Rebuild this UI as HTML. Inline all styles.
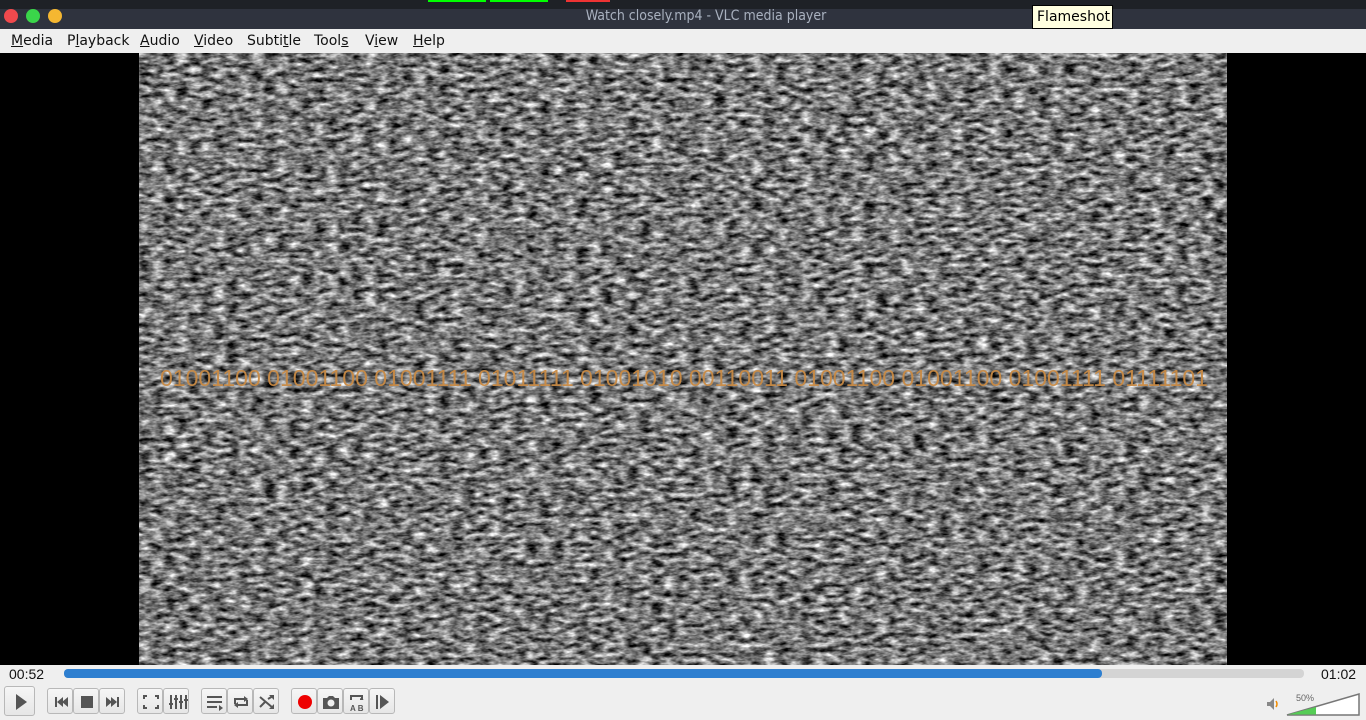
<!DOCTYPE html>
<html><head><meta charset="utf-8"><style>
*{margin:0;padding:0;box-sizing:border-box}
body{width:1366px;height:720px;overflow:hidden;background:#000;font-family:"Liberation Sans","DejaVu Sans",sans-serif;position:relative}
.a{position:absolute}
.menu span{position:absolute;top:4px;color:#111;font-family:"DejaVu Sans",sans-serif;font-size:14px}
.btn{position:absolute;top:688px;height:26px;border:1px solid #b8b8b8;border-radius:3px;background:linear-gradient(#f6f6f6,#e6e6e6)}
.btn svg{position:absolute;left:0;top:0}
</style></head><body>
<div class="a" style="left:0;top:0;width:1366px;height:9px;background:#1e2126"></div>
<div class="a" style="left:428px;top:0;width:58px;height:2px;background:#0f0"></div>
<div class="a" style="left:490px;top:0;width:58px;height:2px;background:#0f0"></div>
<div class="a" style="left:566px;top:0;width:44px;height:2px;background:#e33"></div>
<div class="a" style="left:0;top:9px;width:1366px;height:20px;background:#2f333e"></div>
<div class="a" style="left:4px;top:9px;width:14px;height:14px;border-radius:50%;background:#f0494d"></div>
<div class="a" style="left:26px;top:9px;width:14px;height:14px;border-radius:50%;background:#3ad64a"></div>
<div class="a" style="left:48px;top:9px;width:14px;height:14px;border-radius:50%;background:#f5b731"></div>
<div class="a" style="left:0;top:8px;width:1412px;text-align:center;color:#a9b1bf;font-size:14px;font-family:'DejaVu Sans Condensed','DejaVu Sans',sans-serif">Watch closely.mp4 - VLC media player</div>
<div class="a" style="left:1032px;top:5px;width:81px;height:24px;background:#ffffe0;border:1px solid #000;font-size:14px;padding:3px 0 0 4px;font-family:'DejaVu Sans',sans-serif;color:#000">Flameshot</div>
<div class="a menu" style="left:0;top:29px;width:1366px;height:24px;background:#efefef">
<span style="left:11px"><u>M</u>edia</span><span style="left:67px">P<u>l</u>ayback</span><span style="left:140px"><u>A</u>udio</span><span style="left:194px"><u>V</u>ideo</span><span style="left:247px">Subti<u>t</u>le</span><span style="left:314px">Tool<u>s</u></span><span style="left:365px">V<u>i</u>ew</span><span style="left:413px"><u>H</u>elp</span>
</div>
<svg class="a" style="left:139px;top:53px" width="1088" height="612">
<filter id="n" x="0" y="0" width="100%" height="100%" color-interpolation-filters="sRGB"><feTurbulence type="fractalNoise" baseFrequency="0.08 0.2" numOctaves="3" seed="4"/><feColorMatrix type="matrix" values="1.5 0 0 0 -0.28  1.5 0 0 0 -0.28  1.5 0 0 0 -0.28  0 0 0 0 1"/></filter>
<rect width="1088" height="612" fill="#7a7a7a"/>
<rect width="1088" height="612" filter="url(#n)"/>
<text x="21" y="333" font-size="23" fill="#c88a45" fill-opacity="0.95" textLength="1048" lengthAdjust="spacingAndGlyphs" font-family="Liberation Sans">01001100 01001100 01001111 01011111 01001010 00110011 01001100 01001100 01001111 01111101</text>
</svg>
<div class="a" style="left:0;top:665px;width:1366px;height:55px;background:#efefef"></div>
<div class="a" style="left:9px;top:666px;font-size:14px;color:#111">00:52</div>
<div class="a" style="left:1321px;top:666px;font-size:14px;color:#111">01:02</div>
<div class="a" style="left:64px;top:669px;width:1240px;height:9px;border-radius:4px;background:#d4d4d4"></div>
<div class="a" style="left:64px;top:669px;width:1038px;height:9px;border-radius:4px;background:#2e7fd0"></div>
<div class="btn" style="left:4px;top:686px;width:31px;height:30px"><svg width="31" height="30"><path d="M11 7l11 8-11 8z" fill="#555"/></svg></div>
<div class="btn" style="left:47px;width:26px"><svg width="26" height="26"><path d="M7 8h2v10H7zM9 13l6-5v10zM14 13l6-5v10z" fill="#555"/></svg></div>
<div class="btn" style="left:73px;width:26px"><svg width="26" height="26"><rect x="7" y="7" width="12" height="12" fill="#555"/></svg></div>
<div class="btn" style="left:99px;width:26px"><svg width="26" height="26"><path d="M6 8l6 5-6 5zM11 8l6 5-6 5zM17 8h2v10h-2z" fill="#555"/></svg></div>
<div class="btn" style="left:137px;width:26px"><svg width="26" height="26"><path d="M6 10V7h3M17 7h3v3M20 16v3h-3M9 19H6v-3" stroke="#555" stroke-width="2" fill="none"/></svg></div>
<div class="btn" style="left:163px;width:26px"><svg width="26" height="26"><path d="M7 6v14M12 6v14M17 6v14M22 6v14" stroke="#555" stroke-width="2"/><path d="M5 15h4M10 10h4M15 13h4M20 11h4" stroke="#555" stroke-width="2"/></svg></div>
<div class="btn" style="left:201px;width:26px"><svg width="26" height="26"><path d="M5 8h15M5 13h15M5 18h10" stroke="#555" stroke-width="2"/><path d="M17 16l4 3-4 3z" fill="#555"/></svg></div>
<div class="btn" style="left:227px;width:26px"><svg width="26" height="26"><path d="M7 15v-5h11M19 11v5H8" stroke="#555" stroke-width="2" fill="none"/><path d="M16 7l4 3-4 3zM10 13l-4 3 4 3z" fill="#555"/></svg></div>
<div class="btn" style="left:253px;width:26px"><svg width="26" height="26"><path d="M6 8l13 11M6 18l5-5M14 10l5-3" stroke="#555" stroke-width="2" fill="none"/><path d="M15 6h5v5zM15 20h5v-5z" fill="#555"/></svg></div>
<div class="btn" style="left:291px;width:26px"><svg width="26" height="26"><circle cx="13" cy="13" r="7" fill="#e00"/></svg></div>
<div class="btn" style="left:317px;width:26px"><svg width="26" height="26"><path d="M5 9h4l2-2h4l2 2h4v11H5z" fill="#555"/><circle cx="13" cy="14" r="3.5" fill="#eee"/></svg></div>
<div class="btn" style="left:343px;width:26px"><svg width="26" height="26"><path d="M7 11V7h11v4" stroke="#555" stroke-width="2" fill="none"/><path d="M16 9l4 2h-4z" fill="#555"/><text x="6" y="22" font-size="8" font-weight="bold" fill="#555" font-family="Liberation Sans">A B</text></svg></div>
<div class="btn" style="left:369px;width:26px"><svg width="26" height="26"><rect x="6" y="6" width="2" height="14" fill="#555"/><path d="M10 6l9 7-9 7z" fill="#555"/></svg></div>
<div class="a" style="left:1296px;top:693px;font-size:9px;color:#666">50%</div>
<svg class="a" style="left:1264px;top:692px" width="102" height="26"><path d="M3 10h3l4-4v12l-4-4H3z" fill="#888"/><path d="M12 9q2 3 0 6" stroke="#f28c00" stroke-width="1.5" fill="none"/><path d="M23 23L95 2v21z" fill="#fff" stroke="#777" stroke-width="1.5"/><path d="M24 22.5l28-7.5v7.5z" fill="#55cc55"/></svg>
</body></html>
